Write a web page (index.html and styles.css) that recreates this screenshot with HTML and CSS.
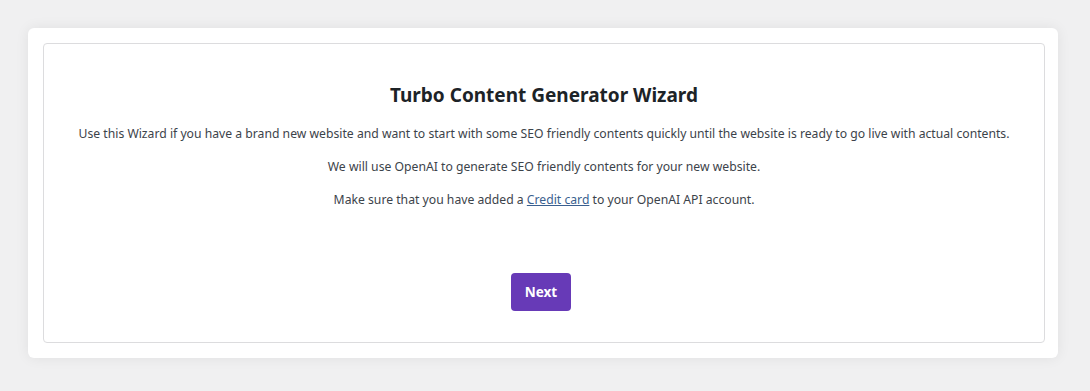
FILE: index.html
```html
<!DOCTYPE html>
<html lang="en">
<head>
    <meta charset="UTF-8">
    <title>Turbo Content Generator Wizard</title>
    <link rel="stylesheet" href="styles.css">
</head>
<body>
    <div class="wrap">
        <div class="wizard">
            <h2>Turbo Content Generator Wizard</h2>
            <p>Use this Wizard if you have a brand new website and want to start with some SEO friendly contents quickly until the website is ready to go live with actual contents.</p>
            <p>We will use OpenAI to generate SEO friendly contents for your new website.</p>
            <p>Make sure that you have added a <a href="#">Credit card</a> to your OpenAI API account.</p>
            <div class="actions">
                <button class="btn-next">Next</button>
            </div>
        </div>
    </div>
</body>
</html>
```

FILE: styles.css
```css
body {
    margin: 0;
    padding: 28px 32px 33px 28px;
    background-color: #f0f0f1;
    font-family: "Noto Sans", Arial, sans-serif;
    color: #3c434a;
}
.wrap {
    background: #fff;
    border-radius: 6px;
    padding: 15px 13px 15px 15px;
    box-shadow: 0 0 14px rgba(0,0,0,0.07);
}
.wizard {
    border: 1px solid #dcdcde;
    border-radius: 4px;
    padding: 36px 20px 30px;
    text-align: center;
    height: 300px;
    box-sizing: border-box;
}
h2 {
    margin: 0 0 14px;
    font-size: 19px;
    font-weight: 700;
    color: #1d2327;
    line-height: 30px;
}
p {
    margin: 0 0 13px;
    font-size: 12.2px;
    line-height: 20px;
}
a {
    color: #3a5f8f;
}
.actions {
    margin-top: 63px;
    padding-right: 6px;
}
.btn-next {
    background-color: #673ab7;
    color: #fff;
    border: none;
    border-radius: 4px;
    width: 60px;
    height: 38px;
    font-family: inherit;
    font-size: 13.5px;
    font-weight: 700;
    cursor: pointer;
}
```
